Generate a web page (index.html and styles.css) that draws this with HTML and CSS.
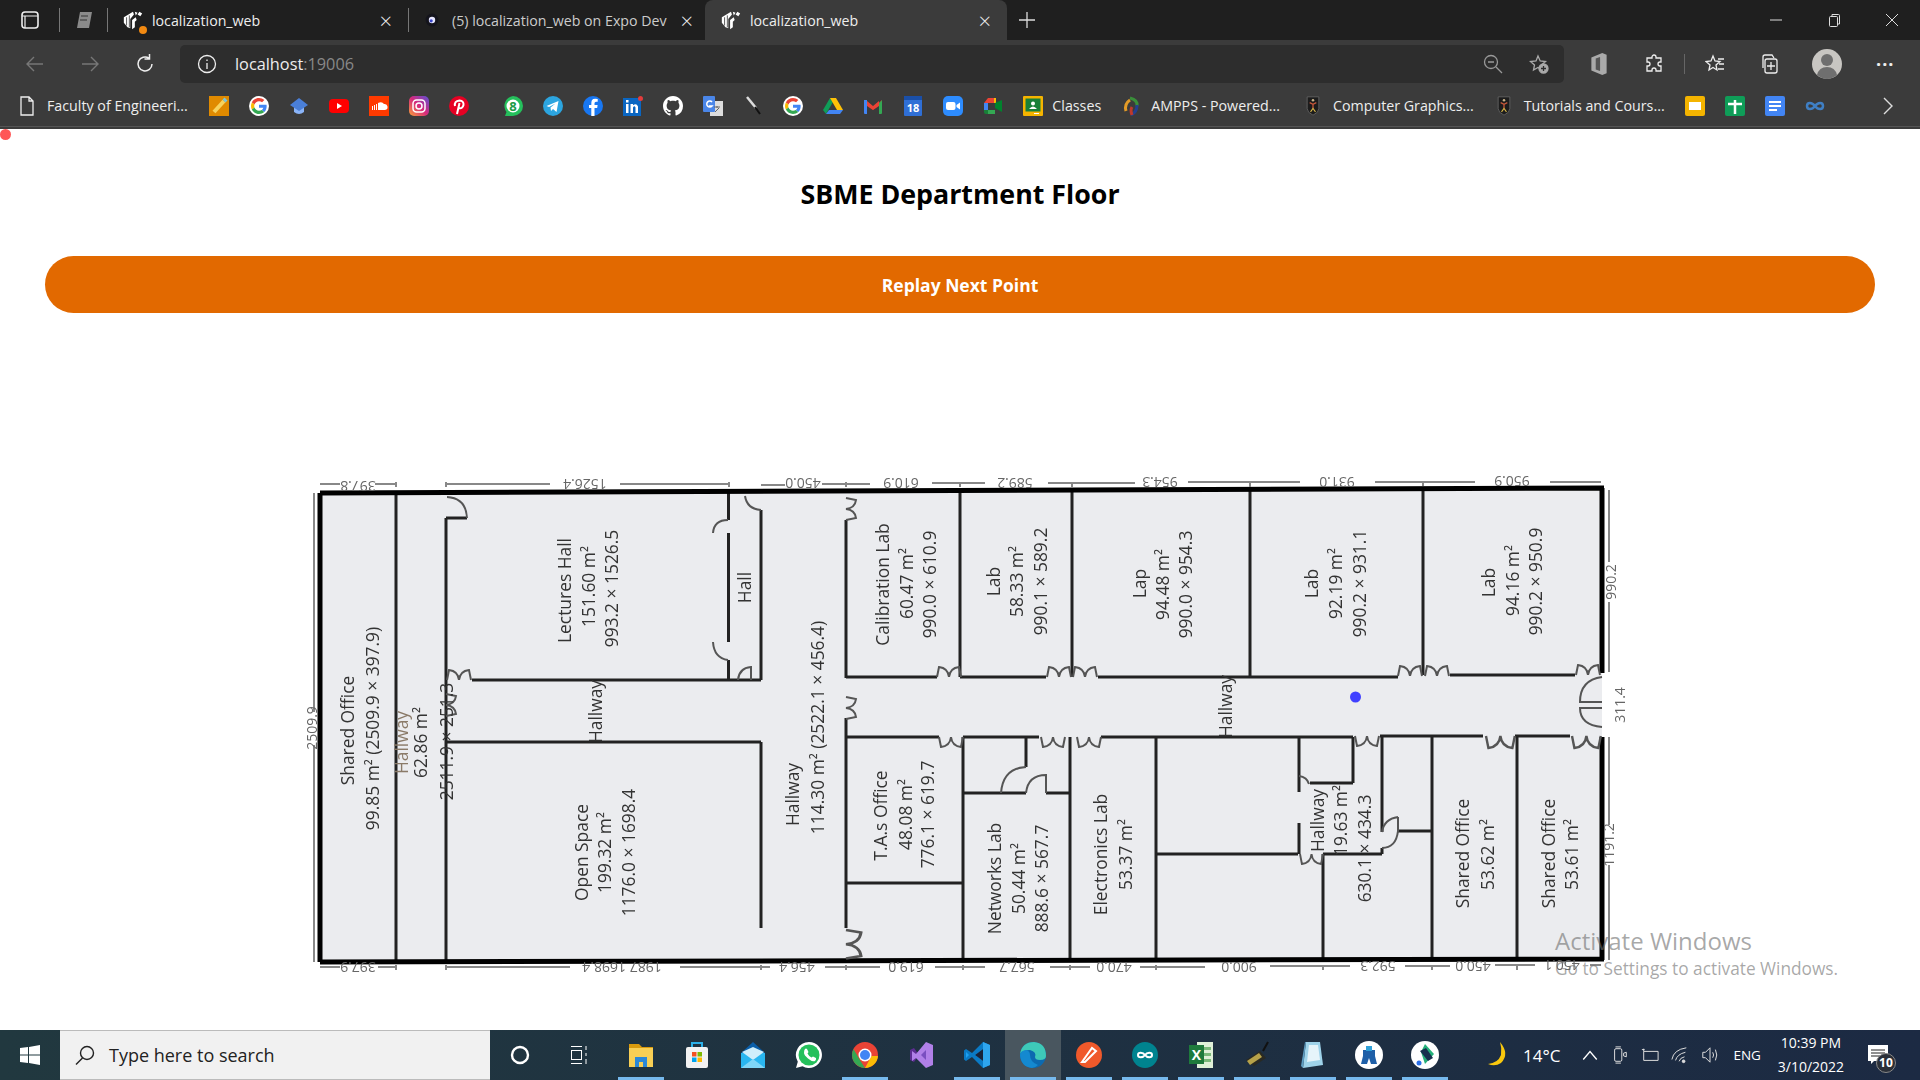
FILE: index.html
```html
<!DOCTYPE html>
<html lang="en">
<head>
	<meta charset="utf-8">
	<title>localization_web</title>
	<link rel="stylesheet" href="styles.css">
</head>
<body>
	<svg class="defs" width="0" height="0">
		<defs>
			<symbol id="expo" viewBox="0 0 24 24">
				<path fill="#fff" d="M2 9 12 3l1 3-4 5v10l-3-1-4-5zM14 3l3 1-2 3zM19 3l3 2-2 3-3-2zM11 12l4-3 1 3-2 2v6l-3 2z"/>
				<path stroke="#222" stroke-width=".8" d="M5 9v9M8 7v13"/>
			</symbol>
			<symbol id="google" viewBox="-6 -6 60 60">
				<circle cx="24" cy="24" r="30" fill="#fff"/>
				<path fill="#EA4335" d="M24 9.5c3.54 0 6.71 1.22 9.21 3.6l6.85-6.85C35.9 2.38 30.47 0 24 0 14.62 0 6.51 5.38 2.56 13.22l7.98 6.19C12.43 13.72 17.74 9.5 24 9.5z"/>
				<path fill="#4285F4" d="M46.98 24.55c0-1.57-.15-3.09-.38-4.55H24v9.02h12.94c-.58 2.96-2.26 5.48-4.78 7.18l7.73 6c4.51-4.18 7.09-10.36 7.09-17.65z"/>
				<path fill="#FBBC05" d="M10.53 28.59c-.48-1.45-.76-2.99-.76-4.59s.27-3.14.76-4.59l-7.98-6.19C.92 16.46 0 20.12 0 24c0 3.88.92 7.54 2.56 10.78l7.97-6.19z"/>
				<path fill="#34A853" d="M24 48c6.48 0 11.93-2.13 15.89-5.81l-7.73-6c-2.15 1.45-4.92 2.3-8.16 2.3-6.26 0-11.57-4.22-13.47-9.91l-7.98 6.19C6.51 42.62 14.62 48 24 48z"/>
			</symbol>
			<symbol id="shield" viewBox="0 0 20 24">
				<path fill="#1c1c1c" stroke="#666" d="M3 1h14v14q0 5-7 8-7-3-7-8z"/>
				<circle cx="10" cy="5" r="1.500" fill="#c9b48a"/>
				<path fill="none" stroke="#c9583a" stroke-width="1.500" d="M6 8l4 2 4-2M10 10v5"/>
				<path fill="none" stroke="#d9b84a" stroke-width="1.300" d="m7 19 3-4 3 4"/>
			</symbol>
			<path id="dd" fill="none" d="M0 0 2-10Q11-9 12 0 13-9 22-10L24 0"/>
			<path id="dv" fill="none" d="M0 0 10 2Q9 10 0 11 9 12 10 20L0 22"/>
		</defs>
	</svg>

	<header class="browser">
		<div class="tabstrip">
			<svg class="ico tab-ws" viewBox="0 0 20 20" fill="none" stroke="#eee" stroke-width="1.6"><rect x="2" y="2" width="16" height="16" rx="3"/><path d="M2 6h16M5 6v12" stroke-width="1.2"/></svg>
			<i class="sep sep-a"></i>
			<svg class="ico tab-md" viewBox="0 0 20 20"><path fill="#8a8a8a" d="M6 2h12l-3 16H3z"/><path stroke="#333" d="M7 6h7M6 10h7"/></svg>
			<i class="sep sep-b"></i>
			<div class="tab tab-one">
				<span class="fav-wrap"><svg class="fav"><use href="#expo"/></svg><b class="fav-dot"></b></span>
				<span class="tab-title">localization_web</span>
				<span class="tab-x">×</span>
			</div>
			<i class="sep"></i>
			<div class="tab tab-two">
				<svg class="fav fav-sm" viewBox="0 0 20 20"><circle cx="10" cy="10" r="8" fill="#14141c"/><circle cx="10" cy="10" r="4" fill="#e8e8ff"/><circle cx="9" cy="11" r="2" fill="#3946c9"/></svg>
				<span class="tab-title tab-clip">(5) localization_web on Expo Dev</span>
				<span class="tab-x">×</span>
			</div>
			<div class="tab tab-active">
				<svg class="fav"><use href="#expo"/></svg>
				<span class="tab-title">localization_web</span>
				<span class="tab-x">×</span>
			</div>
			<svg class="ico tab-plus" viewBox="0 0 20 20" stroke="#ddd" stroke-width="1.3"><path d="M10 2v16M2 10h16"/></svg>
			<div class="win-btns">
				<svg class="ico" viewBox="0 0 14 14" stroke="#ddd"><path d="M1 7h12"/></svg>
				<svg class="ico" viewBox="0 0 14 14" fill="none" stroke="#ddd"><rect x="2.5" y="3.5" width="8" height="10" rx="1"/><path d="M5 3V1.500h6.500a1 1 0 0 1 1 1V11H11"/></svg>
				<svg class="ico" viewBox="0 0 14 14" stroke="#ddd"><path d="m1 1 12 12M13 1 1 13"/></svg>
			</div>
		</div>

		<div class="toolbar">
			<svg class="ico nav" viewBox="0 0 20 20" fill="none" stroke="#777" stroke-width="1.4"><path d="M18 10H2M9 3l-7 7 7 7"/></svg>
			<svg class="ico nav" viewBox="0 0 20 20" fill="none" stroke="#777" stroke-width="1.4"><path d="M2 10h16M11 3l7 7-7 7"/></svg>
			<svg class="ico nav" viewBox="0 0 20 20" fill="none" stroke="#eee" stroke-width="1.5"><path d="M17 10a7 7 0 1 1-3-5.800M14.500 0v5h-5"/></svg>
			<div class="omnibox">
				<svg class="ico" viewBox="0 0 20 20" fill="none" stroke="#eee" stroke-width="1.3"><circle cx="10" cy="10" r="8.500"/><path d="M10 9v6M10 5.500v1.500"/></svg>
				<span class="url">localhost<span class="port">:19006</span></span>
				<svg class="ico omni-zoom" viewBox="0 0 20 20" fill="none" stroke="#999" stroke-width="1.300"><circle cx="8" cy="8" r="6.500"/><path d="M5 8h6M13 13l6 6"/></svg>
				<svg class="ico omni-star" viewBox="0 0 20 20" fill="none" stroke="#aaa" stroke-width="1.300"><path d="m9 2 2.200 5 5.300.5-4 3.500 1 5L9 13.500 4.500 16l1-5-4-3.500L7 7z"/><circle cx="14.500" cy="14.500" r="4.500" fill="#aaa"/><path stroke="#2d2d2d" d="M14.500 12v5M12 14.500h5"/></svg>
			</div>
			<svg class="ico tool tool-first" viewBox="0 0 16 22"><path fill="#aaa" d="M1 5 11 1l4 1.500v17L11 21 1 17z"/><path fill="#555" d="M5 6l4-1.500v13L5 16z"/></svg>
			<svg class="ico tool tool-ext" viewBox="0 0 20 20" fill="none" stroke="#eee" stroke-width="1.300"><path d="M8 3a2 2 0 0 1 4 0v1h5v4h-1a2 2 0 0 0 0 4h1v5h-5v-1a2 2 0 0 0-4 0v1H3v-5h1a2 2 0 0 0 0-4H3V4h5z"/></svg>
			<i class="tool-sep"></i>
			<svg class="ico tool tool-fav" viewBox="0 0 20 20" fill="none" stroke="#eee" stroke-width="1.300"><path d="m8 2 2 5 5 .5-4 3.500 1 5-4-2.500L4 16l1-5-4-3.500L6 7zM13 5h6M14 10h5M13 15h6"/></svg>
			<svg class="ico tool" viewBox="0 0 20 20" fill="none" stroke="#eee" stroke-width="1.300"><path d="M4 14V3a2 2 0 0 1 2-2h7l2 3"/><rect x="6" y="5" width="12" height="14" rx="2"/><path d="M12 8v8M8 12h8"/></svg>
			<svg class="avatar" viewBox="0 0 30 30"><circle cx="15" cy="15" r="15" fill="#c8c6c2"/><circle cx="15" cy="11" r="6" fill="#6f6f6f"/><path fill="#6f6f6f" d="M5 26q2-8 10-8t10 8q-10 8-20 0z"/></svg>
			<span class="dots">···</span>
		</div>

		<nav class="bookmarks">
			<div class="bm bm-first">
				<svg class="bm-ico" viewBox="0 0 20 20" fill="none" stroke="#eee" stroke-width="1.300"><path d="M4 1h8l4 4v14H4zM12 1v4h4"/></svg>
				<span class="bm-text">Faculty of Engineeri...</span>
			</div>
			<svg class="bm-ico" viewBox="0 0 20 20"><rect width="20" height="20" fill="#e08a00"/><path stroke="#f7d25c" stroke-width="4" d="M5 16 15 5"/><path stroke="#7ec7d8" stroke-width="4" d="m15 5 2-2"/></svg>
			<svg class="bm-ico"><use href="#google"/></svg>
			<svg class="bm-ico" viewBox="0 0 20 20"><path fill="#8ab4f8" d="M5 10h10v6q-5 4-10 0z"/><path fill="#4a7fd8" d="M10 2l9 7-9 6-9-6z"/></svg>
			<svg class="bm-ico" viewBox="0 0 20 20"><rect y="3" width="20" height="14" rx="4" fill="#f00"/><path fill="#fff" d="m8 7 5 3-5 3z"/></svg>
			<svg class="bm-ico" viewBox="0 0 20 20"><rect width="20" height="20" fill="#ff3a00"/><path fill="#fff" d="M15 8a3 3 0 0 1 1 6H9V7q4-2 6 1zM8 8v6H7V8zM6 9v5H5V9zM4 10v4H3v-4z"/></svg>
			<svg class="bm-ico" viewBox="0 0 20 20"><defs><linearGradient id="ig" x1="0" y1="1" x2="1" y2="0"><stop offset="0" stop-color="#f9a13a"/><stop offset=".5" stop-color="#d6297b"/><stop offset="1" stop-color="#5b51d8"/></linearGradient></defs><rect width="20" height="20" rx="5" fill="url(#ig)"/><rect x="4" y="4" width="12" height="12" rx="3.500" fill="none" stroke="#fff" stroke-width="1.500"/><circle cx="10" cy="10" r="3" fill="none" stroke="#fff" stroke-width="1.500"/></svg>
			<svg class="bm-ico" viewBox="0 0 20 20"><circle cx="10" cy="10" r="10" fill="#e60023"/><path fill="none" stroke="#fff" stroke-width="2" d="M8 18l2.500-11M6 10Q5 5 10.500 4.500 15 5 14.500 9 13.500 13 10 12"/></svg>
			<svg class="bm-ico bm-gap" viewBox="0 0 20 20"><path fill="#25c05c" d="M10 0a10 10 0 0 1 0 20H2l1.500-4A10 10 0 0 1 10 0z"/><circle cx="10" cy="10" r="6.500" fill="#fff"/><text class="ico-num ico-num-green" x="10" y="14.500">8</text></svg>
			<svg class="bm-ico" viewBox="0 0 20 20"><circle cx="10" cy="10" r="10" fill="#2ca5e0"/><path fill="#fff" d="m3.500 10 12-5-2 11-3.500-3-2 2-.5-3.500 5-4-6.500 3.500z"/></svg>
			<svg class="bm-ico" viewBox="0 0 20 20"><circle cx="10" cy="10" r="10" fill="#1877f2"/><path fill="#fff" d="M11.500 20v-8h2.700l.4-3h-3.100V7.200q0-1.500 1.500-1.500h1.700V3q-4.600-.9-5.800 1.200-.7 1.100-.6 4.800H6v3h2.300v8z"/></svg>
			<svg class="bm-ico" viewBox="0 0 20 20"><rect y="2" width="18" height="18" fill="#0a66c2"/><path fill="#fff" d="M3 8h2.500v9H3zM3 4h2.500v2.500H3zM7.500 8H10v1.200Q13.500 6.800 15 10.500V17h-2.500v-5.500q-1-2.500-2.500 0V17H7.500z"/><circle cx="17.500" cy="2.500" r="2.500" fill="#e23c3c"/></svg>
			<svg class="bm-ico" viewBox="0 0 16 16"><path fill="#fff" d="M8 0C3.580 0 0 3.580 0 8c0 3.540 2.290 6.530 5.470 7.590.4.070.55-.17.55-.38 0-.19-.01-.82-.01-1.490-2.010.37-2.530-.49-2.690-.94-.09-.23-.48-.94-.82-1.130-.28-.15-.68-.52-.01-.53.63-.01 1.080.58 1.230.82.720 1.210 1.870.87 2.330.66.070-.52.28-.87.51-1.070-1.780-.2-3.640-.89-3.640-3.950 0-.87.31-1.590.82-2.150-.08-.2-.36-1.020.08-2.120 0 0 .67-.21 2.200.82.64-.18 1.320-.27 2-.27.68 0 1.360.09 2 .27 1.530-1.040 2.200-.82 2.200-.82.44 1.100.16 1.920.08 2.120.51.56.82 1.270.82 2.150 0 3.070-1.870 3.750-3.650 3.950.29.25.54.73.54 1.480 0 1.070-.01 1.930-.01 2.200 0 .21.15.46.55.38A8.013 8.013 0 0 0 16 8c0-4.420-3.580-8-8-8z"/></svg>
			<svg class="bm-ico" viewBox="0 0 20 20"><rect x="7" y="5" width="13" height="15" fill="#ddd"/><rect width="12" height="16" rx="1" fill="#4a86e8"/><path stroke="#fff" stroke-width="1.500" fill="none" d="M9 6a3 3 0 1 0 0 4H6"/><path stroke="#666" d="M11 11h6M14 10v2M12 16l4-4"/></svg>
			<svg class="bm-ico" viewBox="0 0 20 20" fill="none"><path stroke="#ddd" stroke-width="2.500" d="m4 1 9 11"/><path stroke="#111" stroke-width="2" d="m12 11 5 7"/></svg>
			<svg class="bm-ico"><use href="#google"/></svg>
			<svg class="bm-ico" viewBox="0 0 20 20"><path fill="#0f9d58" d="M7 2 0 14l3 4 7-12z"/><path fill="#ffc107" d="M7 2h6l7 12h-6z"/><path fill="#4285f4" d="M3 18h14l3-4H6z"/></svg>
			<svg class="bm-ico" viewBox="0 0 20 20"><path fill="#c5221f" d="M1 4l9 7 9-7v3l-9 7-9-7z"/><path fill="#4285f4" d="M1 4h3v14H2a1 1 0 0 1-1-1z"/><path fill="#34a853" d="M16 7l3-3v13a1 1 0 0 1-1 1h-2z"/><path fill="#ea4335" d="M4 5l6 5 6-5v5l-6 4-6-4z"/></svg>
			<svg class="bm-ico" viewBox="0 0 20 20"><rect x="1" width="18" height="20" rx="1" fill="#2f6fd6"/><rect x="1" width="18" height="4" fill="#1a4fa8"/><text class="ico-num ico-num-white" x="10" y="16">18</text></svg>
			<svg class="bm-ico" viewBox="0 0 20 20"><rect width="20" height="20" rx="5" fill="#2d8cff"/><rect x="3" y="6" width="9.500" height="8" rx="2" fill="#fff"/><path fill="#fff" d="m13.500 9 3.500-2.500v7L13.500 11z"/></svg>
			<svg class="bm-ico" viewBox="0 0 20 20"><path fill="#ea4335" d="M5 2h6v5H1z"/><path fill="#4285f4" d="M1 7h4v7H1z"/><path fill="#188038" d="M1 14h4v4H3a2 2 0 0 1-2-2z"/><path fill="#34a853" d="M5 14h7v4H5z"/><path fill="#fbbc04" d="M11 2h2v5H11z"/><path fill="#00832d" d="M12 7l7-3v12l-7-4z"/><rect x="5" y="7" width="7" height="7" fill="#3b3b3b"/></svg>
			<div class="bm bm-tight">
				<svg class="bm-ico" viewBox="0 0 20 20"><rect width="20" height="20" rx="1" fill="#f5b400"/><rect x="2.500" y="2.500" width="15" height="13" fill="#188038"/><circle cx="10" cy="7.500" r="2" fill="#fff"/><path fill="#fff" d="M6 13q4-5 8 0zM11 17h5v1h-5z"/></svg>
				<span class="bm-text">Classes</span>
			</div>
			<div class="bm bm-wide">
				<svg class="bm-ico" viewBox="0 0 20 20" fill="none" stroke-width="3"><path stroke="#3a8f3a" d="M9 2q8 2 7 8"/><path stroke="#24408f" d="M16 9q0 7-6 10"/><path stroke="#c0392b" d="M11 19q-2-5 0-8"/><path stroke="#e39b27" d="M9 4Q3 8 5 15"/></svg>
				<span class="bm-text">AMPPS - Powered...</span>
			</div>
			<div class="bm">
				<svg class="bm-ico"><use href="#shield"/></svg>
				<span class="bm-text">Computer Graphics...</span>
			</div>
			<div class="bm">
				<svg class="bm-ico"><use href="#shield"/></svg>
				<span class="bm-text">Tutorials and Cours...</span>
			</div>
			<svg class="bm-ico" viewBox="0 0 20 20"><rect width="20" height="20" rx="2" fill="#f4b400"/><rect x="4" y="6" width="12" height="8" fill="#fff"/></svg>
			<svg class="bm-ico" viewBox="0 0 20 20"><rect width="20" height="20" rx="2" fill="#0f9d58"/><path stroke="#fff" stroke-width="2.500" d="M3 8h14M10 4v14"/></svg>
			<svg class="bm-ico" viewBox="0 0 20 20"><rect width="20" height="20" rx="2" fill="#4285f4"/><path stroke="#fff" stroke-width="2" d="M4 6h12M4 10h12M4 14h8"/></svg>
			<svg class="bm-ico" viewBox="0 0 20 20" fill="none" stroke="#3f7fc4" stroke-width="2.500"><path d="M10 10C7 6 2 6 2 10s5 4 8 0 8-4 8 0-5 4-8 0z"/></svg>
			<svg class="ico bm-more" viewBox="0 0 20 20" fill="none" stroke="#ddd" stroke-width="1.400"><path d="m6 2 8 8-8 8"/></svg>
		</nav>
	</header>

	<main class="page">
		<b class="rec-dot"></b>
		<h1 class="title">SBME Department Floor</h1>
		<button class="replay">Replay Next Point</button>

		<svg class="plan" viewBox="290 460 1370 530" width="1370" height="530">
			<polygon class="floor" points="320,493 1602,488 1602,959 320,962"/>

			<!-- inner walls -->
			<path class="wall" d="M396 493V962M446 518V962M446 518H467M728.500 493V520M728.500 533V642M728.500 660V680M761 510V680M472 680H761M446 742H761M761 742V928
				M846 520V678M846 718V928M960 490V677M1072 490V677M1250 489V676M1423 488V675
				M846 677H937M960 677H1046M1098 677H1398M1450 675H1575
				M847 737H939M963 737H1039M1101 737H1353M1380 736H1483M1515 736H1570
				M963 737V961M1026 737V767M963 793H1026M1046 793H1069M1070 737V961M1156 737V961
				M1156 854H1298M847 883H963M1299 737V792M1299 823V854M1310 783H1353M1353 737V783
				M1382 736V832M1382 848V854M1398 831H1431M1432 736V960M1517 736V960M1323 854H1382M1323 854V960"/>

			<!-- outer walls -->
			<path class="outer" d="M320 493V962M320 493 1604 488M320 962 1604 959M1602 488V673M1602 737V960"/>

			<!-- doors -->
			<g class="door">
				<use href="#dd" transform="translate(937 677)"/>
				<use href="#dd" transform="translate(1047 677)"/>
				<use href="#dd" transform="translate(1073 677)"/>
				<use href="#dd" transform="translate(1398 676)"/>
				<use href="#dd" transform="translate(1425 676)"/>
				<use href="#dd" transform="translate(1576 675)"/>
				<use href="#dd" transform="translate(939 737) scale(1 -1)"/>
				<use href="#dd" transform="translate(1041 737) scale(1 -1)"/>
				<use href="#dd" transform="translate(1077 737) scale(1 -1)"/>
				<use href="#dd" transform="translate(1355 736) scale(1 -1)"/>
				<use href="#dd" transform="translate(1486 736) scale(1.200 -1.200)"/>
				<use href="#dd" transform="translate(1572 736) scale(1.200 -1.200)"/>
				<use href="#dd" transform="translate(1300 854) scale(.96 -1)"/>
				<use href="#dd" transform="translate(447 680)"/>
				<use href="#dv" transform="translate(846 498)"/>
				<use href="#dv" transform="translate(846 697)"/>
				<use href="#dv" transform="translate(846 930) scale(1.500 1.300)"/>
				<use href="#dv" transform="translate(446 694)"/>
				<path d="M447 497Q466 498 467 518M713 533Q714 520 728 520M713 642Q714 658 728 660M738 680Q739 668 751 667V680M745 496Q747 509 761 510
					M1001 793Q1003 768 1026 767M1026 793Q1028 775 1046 775V793M1299 776Q1307 777 1309 784
					M1398 817V831Q1396 848 1382 848M1382 832Q1384 819 1398 817
					M1602 677Q1580 680 1580 702H1602M1602 727Q1580 725 1580 708H1602"/>
			</g>

			<!-- dimension lines, the drawing's own labels run upside down -->
			<path class="dim" d="M314 493V712M314 745V962M320 484H340M375 484H396M446 484H550M620 484H729M761 485H785M822 484H870M932 483H985M1048 483H1135M1188 482H1300M1375 482H1475M1550 482H1601M1609 490V562M1609 602V672M1609 737V825M1609 865V960
				M320 967H340M378 967H396M446 967H570M680 967H770M825 967H880M935 967H985M1050 967H1090M1140 967H1205M1270 966H1350M1405 966H1450M1495 965H1535M1590 965H1601
				M396 482V487M446 482V487M729 482V487M846 482V487M960 482V487M1072 482V487M1250 482V487M1423 481V486M396 965V970M446 965V970M761 965V970M846 965V970M963 965V970M1070 965V970M1156 965V970M1323 965V970M1432 965V970M1517 965V970"/>
			<g class="dim-text">
				<text transform="rotate(180 358 486)" x="358" y="486">397.8</text>
				<text transform="rotate(180 585 484)" x="585" y="484">1526.4</text>
				<text transform="rotate(180 803 483)" x="803" y="483">450.0</text>
				<text transform="rotate(180 901 483)" x="901" y="483">610.9</text>
				<text transform="rotate(180 1015 483)" x="1015" y="483">589.2</text>
				<text transform="rotate(180 1160 482)" x="1160" y="482">954.3</text>
				<text transform="rotate(180 1337 482)" x="1337" y="482">931.0</text>
				<text transform="rotate(180 1512 481)" x="1512" y="481">950.9</text>
				<text transform="rotate(180 358 967)" x="358" y="967">397.9</text>
				<text transform="rotate(180 622 967)" x="622" y="967">1987 1698.4</text>
				<text transform="rotate(180 797 967)" x="797" y="967">456.4</text>
				<text transform="rotate(180 906 967)" x="906" y="967">619.0</text>
				<text transform="rotate(180 1017 967)" x="1017" y="967">567.7</text>
				<text transform="rotate(180 1114 967)" x="1114" y="967">470.0</text>
				<text transform="rotate(180 1239 967)" x="1239" y="967">900.0</text>
				<text transform="rotate(180 1378 966)" x="1378" y="966">592.3</text>
				<text transform="rotate(180 1473 966)" x="1473" y="966">450.0</text>
				<text transform="rotate(180 1562 965)" x="1562" y="965">450.1</text>
				<text transform="rotate(-90 311 728)" x="311" y="728">2509.9</text>
				<text transform="rotate(-90 1610 582)" x="1610" y="582">990.2</text>
				<text transform="rotate(-90 1608 845)" x="1608" y="845">1191.2</text>
				<text transform="rotate(-90 1619 705)" x="1619" y="705">311.4</text>
			</g>

			<!-- room labels -->
			<g class="room" transform="translate(0 1.500)">
				<text transform="rotate(-90 347 729)" x="347" y="729">Shared Office</text>
				<text transform="rotate(-90 372 727)" x="372" y="727">99.85 m² (2509.9 × 397.9)</text>
				<text transform="rotate(-90 401 741)" x="401" y="741" class="room-faint">Hallway</text>
				<text transform="rotate(-90 420 741)" x="420" y="741">62.86 m²</text>
				<text transform="rotate(-90 446 740)" x="446" y="740">2511.9 × 251.3</text>
				<text transform="rotate(-90 564 589)" x="564" y="589">Lectures Hall</text>
				<text transform="rotate(-90 587.500 585)" x="587.500" y="585">151.60 m²</text>
				<text transform="rotate(-90 611 587)" x="611" y="587">993.2 × 1526.5</text>
				<text transform="rotate(-90 744 586)" x="744" y="586">Hall</text>
				<text transform="rotate(-90 595 710)" x="595" y="710">Hallway</text>
				<text transform="rotate(-90 792 793)" x="792" y="793">Hallway</text>
				<text transform="rotate(-90 817 726)" x="817" y="726">114.30 m² (2522.1 × 456.4)</text>
				<text transform="rotate(-90 581 851)" x="581" y="851">Open Space</text>
				<text transform="rotate(-90 604 851)" x="604" y="851">199.32 m²</text>
				<text transform="rotate(-90 627.500 851)" x="627.500" y="851">1176.0 × 1698.4</text>
				<text transform="rotate(-90 882 583)" x="882" y="583">Calibration Lab</text>
				<text transform="rotate(-90 906 582)" x="906" y="582">60.47 m²</text>
				<text transform="rotate(-90 929 583)" x="929" y="583">990.0 × 610.9</text>
				<text transform="rotate(-90 992.500 580)" x="992.500" y="580">Lab</text>
				<text transform="rotate(-90 1016 580)" x="1016" y="580">58.33 m²</text>
				<text transform="rotate(-90 1040 580)" x="1040" y="580">990.1 × 589.2</text>
				<text transform="rotate(-90 1139 582)" x="1139" y="582">Lap</text>
				<text transform="rotate(-90 1162 583)" x="1162" y="583">94.48 m²</text>
				<text transform="rotate(-90 1185 583)" x="1185" y="583">990.0 × 954.3</text>
				<text transform="rotate(-90 1311 582)" x="1311" y="582">Lab</text>
				<text transform="rotate(-90 1335 582)" x="1335" y="582">92.19 m²</text>
				<text transform="rotate(-90 1358.500 582)" x="1358.500" y="582">990.2 × 931.1</text>
				<text transform="rotate(-90 1488 581)" x="1488" y="581">Lab</text>
				<text transform="rotate(-90 1512 579)" x="1512" y="579">94.16 m²</text>
				<text transform="rotate(-90 1535 580)" x="1535" y="580">990.2 × 950.9</text>
				<text transform="rotate(-90 1225 705)" x="1225" y="705">Hallway</text>
				<text transform="rotate(-90 880 814)" x="880" y="814">T.A.s Office</text>
				<text transform="rotate(-90 905 813)" x="905" y="813">48.08 m²</text>
				<text transform="rotate(-90 927 813)" x="927" y="813">776.1 × 619.7</text>
				<text transform="rotate(-90 993.500 877)" x="993.500" y="877">Networks Lab</text>
				<text transform="rotate(-90 1017.500 877)" x="1017.500" y="877">50.44 m²</text>
				<text transform="rotate(-90 1041 877)" x="1041" y="877">888.6 × 567.7</text>
				<text transform="rotate(-90 1100 853)" x="1100" y="853">Electronics Lab</text>
				<text transform="rotate(-90 1125 853)" x="1125" y="853">53.37 m²</text>
				<text transform="rotate(-90 1317 819)" x="1317" y="819">Hallway</text>
				<text transform="rotate(-90 1340 819)" x="1340" y="819">19.63 m²</text>
				<text transform="rotate(-90 1364 847)" x="1364" y="847">630.1 × 434.3</text>
				<text transform="rotate(-90 1462 852)" x="1462" y="852">Shared Office</text>
				<text transform="rotate(-90 1487 853)" x="1487" y="853">53.62 m²</text>
				<text transform="rotate(-90 1548 852)" x="1548" y="852">Shared Office</text>
				<text transform="rotate(-90 1571 853)" x="1571" y="853">53.61 m²</text>
			</g>

			<circle class="pos" cx="1355.500" cy="697" r="5.500"/>
		</svg>

		<div class="activate">
			<div class="activate-big">Activate Windows</div>
			<div class="activate-small">Go to Settings to activate Windows.</div>
		</div>
	</main>

	<footer class="taskbar">
		<svg class="ico start" viewBox="0 0 20 20" fill="#fff"><path d="M0 3l8-1v7.500H0zM9 2l11-2v9.500H9zM0 10.500h8V18l-8-1zM9 10.500h11V20L9 18z"/></svg>
		<div class="search">
			<svg class="ico" viewBox="0 0 20 20" fill="none" stroke="#222" stroke-width="1.400"><circle cx="12" cy="8" r="6.500"/><path d="M7.500 13 1 19.500"/></svg>
			<span>Type here to search</span>
		</div>
		<div class="cell"><svg class="ico" viewBox="0 0 20 20" fill="none" stroke="#fff" stroke-width="2.400"><circle cx="10" cy="10" r="8"/></svg></div>
		<div class="cell cell-task"><svg class="ico" viewBox="0 0 20 20" fill="none" stroke="#fff"><path d="M1 1.500h11M1 18.500h11"/><rect x="1.500" y="5.500" width="10" height="9"/><path d="M16 1v4M16 8v3M16 14v5"/></svg></div>
		<div class="cell on"><svg class="tb-ico" viewBox="0 0 28 28"><path fill="#d99a0d" d="M2 3h10l3 3h11v4H2z"/><path fill="#f8cf55" d="M2 7h24v19H2z"/><path fill="#2b88d8" d="M8 16h12v10h-4v-5h-4v5H8z"/></svg></div>
		<div class="cell"><svg class="tb-ico" viewBox="0 0 28 28"><path fill="none" stroke="#2cb0e8" stroke-width="2" d="M9 8V2h10v6"/><rect x="3" y="6" width="22" height="21" rx="2" fill="#f2f2f2"/><path fill="#f25022" d="M9 11h4.500v4.500H9z"/><path fill="#7fba00" d="M14.500 11H19v4.500h-4.500z"/><path fill="#00a4ef" d="M9 16.500h4.500V21H9z"/><path fill="#ffb900" d="M14.500 16.500H19V21h-4.500z"/></svg></div>
		<div class="cell"><svg class="tb-ico" viewBox="0 0 28 28"><path fill="#0b5ea8" d="M14 1 26 12H2z"/><path fill="#29b6f0" d="M2 12h24v15H2z"/><path fill="#cfeefb" d="m3 11 11 8 11-8-11-5z"/><path fill="#7fd6f7" d="m2 27 12-9 12 9z"/></svg></div>
		<div class="cell"><svg class="tb-ico" viewBox="0 0 28 28"><path fill="#fff" d="M14 1a13 13 0 1 1-6.500 24.300L1 27l1.800-6.300A13 13 0 0 1 14 1z"/><circle cx="14" cy="14" r="10.500" fill="#25c05c"/><path fill="#fff" d="M10 8q1-1 2 0l1.500 3-1 1.500q1.500 3 4 4l1.500-1 3 1.500q.5 1.500-1 3-3 1-7-2.500T9 12q0-3 1-4z"/></svg></div>
		<div class="cell on"><svg class="tb-ico" viewBox="0 0 28 28"><circle cx="14" cy="14" r="13" fill="#ea4335"/><path fill="#34a853" d="M14 27A13 13 0 0 1 2.500 8l7 12z"/><path fill="#fbbc05" d="M14 27l6.500-12H14h13a13 13 0 0 1-13 12z"/><circle cx="14" cy="14" r="6.500" fill="#fff"/><circle cx="14" cy="14" r="5" fill="#4285f4"/></svg></div>
		<div class="cell"><svg class="tb-ico" viewBox="0 0 28 28"><path fill="#5c2d91" d="M3 9l4-2 5 7-5 7-4-2z"/><path fill="#b180e8" d="m19 1 7 3v20l-7 3-10-10-4 3V10l4 3z"/><path fill="#7a4fc0" d="M19 9v10l-5-5z"/></svg></div>
		<div class="cell on"><svg class="tb-ico" viewBox="0 0 28 28"><path fill="#0a7ac5" d="M20 1 9 12 3 8 1 9.500v9L3 20l6-4 11 11 7-3V4z"/><path fill="#2ea5ee" d="M20 1 27 4v20l-7 3zM20 8l-8 6 8 6z"/><path fill="#17223a" d="M20 8v12l-8-6z"/><path fill="#1da1f2" d="M3 11l3 3-3 3z"/></svg></div>
		<div class="cell on cell-active"><svg class="tb-ico" viewBox="0 0 28 28"><circle cx="14" cy="14" r="13" fill="#0c6ab0"/><path fill="#3ec9b8" d="M1 13Q3 1 15 1q12 1 12 14 0 4-6 4-5 0-5-3 2-5-5-7-8 0-10 4z"/><path fill="#1489d0" d="M1 14q0-4 6-5 4 1 4 5 0 7 8 10-3 3-6 3Q2 26 1 14z"/></svg></div>
		<div class="cell on"><svg class="tb-ico" viewBox="0 0 28 28"><circle cx="14" cy="14" r="13" fill="#f0592b"/><path fill="none" stroke="#fff" stroke-width="2" d="m7 21 10-14 4 3-11 11z"/></svg></div>
		<div class="cell on"><svg class="tb-ico" viewBox="0 0 28 28"><circle cx="14" cy="14" r="13" fill="#00838f"/><path fill="none" stroke="#fff" stroke-width="2" d="M14 14c-2-3-7-3-7 0s5 3 7 0 7-3 7 0-5 3-7 0z"/></svg></div>
		<div class="cell on"><svg class="tb-ico" viewBox="0 0 28 28"><path fill="#dff0d8" d="M10 1h16v26H10z"/><path fill="#7ab97a" d="M15 6h9v3h-9zM15 12h9v3h-9zM15 18h9v3h-9z"/><path fill="#1e7a3c" d="M2 4h15v19H2z"/><text class="ico-x" x="9.500" y="19">X</text></svg></div>
		<div class="cell on"><svg class="tb-ico" viewBox="0 0 28 28"><path fill="#2a2a22" d="m3 19 14-9 6 7-12 8z"/><path fill="#b6a24a" d="m4 20 12-8 3 4-12 8z"/><path stroke="#111" stroke-width="2" d="M20 10l5-9"/></svg></div>
		<div class="cell on"><svg class="tb-ico" viewBox="0 0 28 28"><path fill="#9fd3ea" d="M7 1h14l3 23-20 3z"/><path fill="#5f9ec3" d="M4 27l3-26-1 0-4 24z"/><path fill="#e6f4fa" d="M10 4h9l2 15-13 2z"/></svg></div>
		<div class="cell on"><svg class="tb-ico" viewBox="0 0 28 28"><circle cx="14" cy="14" r="14" fill="#fff"/><path fill="#1e5fa8" d="M8 9h12v6l2 8h-6l-2-6-2 6H6l2-8z"/><path fill="#2fa0d8" d="M11 5h6v5h-6z"/></svg></div>
		<div class="cell on"><svg class="tb-ico" viewBox="0 0 28 28"><circle cx="14" cy="14" r="14" fill="#fff"/><path fill="#25b07a" d="m14 3 9 10-9 10-4-12z"/><path fill="#17304d" d="m9 10 6-3 7 10-5 3z"/><circle cx="8" cy="22" r="2.500" fill="#2a6fe8"/></svg></div>
		<div class="tray">
			<svg class="tb-ico tray-moon" viewBox="0 0 24 28"><path fill="#f9c80e" d="M14 1q10 12 1 21-6 4-13 1 10-1 13-9 1-7-1-13z"/></svg>
			<span class="tray-temp">14°C</span>
			<svg class="ico tray-ico" viewBox="0 0 16 16" fill="none" stroke="#fff" stroke-width="1.200"><path d="m2 12 6-7 6 7"/></svg>
			<svg class="ico tray-ico" viewBox="0 0 16 20" fill="none" stroke="#ddd" stroke-width="1.100"><rect x="2" y="3" width="8" height="14" rx="1.500"/><path d="m12 8 3-1v5l-3-1zM3 1h6M3 19h6"/></svg>
			<svg class="ico tray-ico" viewBox="0 0 20 16" fill="none" stroke="#ddd" stroke-width="1.100"><path d="M3 4h16v10H3zM1 2h3M3 1v3"/></svg>
			<svg class="ico tray-ico" viewBox="0 0 20 20" fill="none" stroke="#ddd" stroke-width="1.100"><path d="M1 15Q3 4 17 2M5 16Q7 9 16 7M9 17q1-4 6-5"/><circle cx="14" cy="17" r="1.500" fill="#ddd"/></svg>
			<svg class="ico tray-ico" viewBox="0 0 20 20" fill="none" stroke="#ddd" stroke-width="1.100"><path d="M2 7h3l5-5v16l-5-5H2zM13 7q2 3 0 6M16 4q3 6 0 12"/></svg>
			<span class="tray-lang">ENG</span>
			<div class="clock"><span>10:39 PM</span><span>3/10/2022</span></div>
			<div class="notif">
				<svg class="ico" viewBox="0 0 20 20"><path fill="#fff" d="M0 0h20v16H6l-3 3v-3H0z"/><path stroke="#222" d="M3 5h14M3 8h14M3 11h14"/></svg>
				<span class="notif-badge">10</span>
			</div>
		</div>
	</footer>
</body>
</html>
```

FILE: styles.css
```css
* {
	box-sizing: border-box;
}

html, body {
	height: 100%;
}

body {
	margin: 0;
	display: flex;
	flex-direction: column;
	height: 1080px;
	overflow: hidden;
	background: #fff;
	font-family: "Open Sans", "Noto Sans", sans-serif;
}

.defs {
	position: absolute;
}

.ico {
	display: block;
	flex: none;
	width: 20px;
	height: 20px;
}

/* browser chrome */
.browser {
	flex: none;
	height: 129px;
	background: #3b3b3b;
	color: #eee;
	font-size: 14.2px;
}

.tabstrip {
	display: flex;
	align-items: center;
	height: 40px;
	padding-left: 20px;
	background: #1f1f1f;
}

.sep {
	flex: none;
	width: 1px;
	height: 24px;
	background: #777;
}

.sep-a {
	margin: 0 14px 0 19px;
}

.sep-b {
	margin: 0 14px 0 13px;
}

.tab-md {
	width: 20px;
}

.tab {
	display: flex;
	align-items: center;
	height: 40px;
	padding-left: 0;
}

.tab-one {
	width: 286px;
}

.tab-two {
	width: 296px;
	padding-left: 15px;
}

.tab-active {
	width: 302px;
	padding-left: 15px;
	background: #3b3b3b;
	border-radius: 8px 8px 0 0;
}

.fav-wrap {
	position: relative;
	flex: none;
}

.fav {
	display: block;
	flex: none;
	width: 22px;
	height: 22px;
}

.fav-sm {
	width: 16px;
	height: 16px;
	margin-right: 6px;
}

.fav-dot {
	position: absolute;
	right: -3px;
	bottom: -3px;
	width: 8px;
	height: 8px;
	border-radius: 50%;
	background: #f28a12;
}

.tab-title {
	margin-left: 8px;
	white-space: nowrap;
	color: #eee;
}

.tab-clip {
	width: 218px;
	margin-left: 6px;
	overflow: hidden;
	color: #ccc;
}

.tab-x {
	margin-left: auto;
	margin-right: 16px;
	font-size: 22px;
	font-weight: 300;
	line-height: 1;
}

.tab-two .tab-x {
	margin-right: 12px;
}

.tab-plus {
	margin-left: 10px;
}

.win-btns {
	display: flex;
	gap: 44px;
	margin-left: auto;
	padding-right: 21px;
}

.win-btns .ico {
	width: 14px;
	height: 14px;
}

.toolbar {
	display: flex;
	align-items: center;
	height: 45px;
	padding: 2px 0 0 25px;
}

.nav {
	margin-right: 35px;
}

.nav:nth-child(3) {
	margin-right: 25px;
}

.omnibox {
	display: flex;
	align-items: center;
	width: 1384px;
	height: 38px;
	padding: 0 15px 0 17px;
	background: #2d2d2d;
	border-radius: 5px;
}

.url {
	margin-left: 18px;
	font-size: 16.3px;
	color: #eee;
}

.port {
	color: #888;
}

.omni-zoom {
	margin-left: auto;
}

.omni-star {
	margin-left: 26px;
}

.tool {
	margin-left: 34px;
}

.tool-first {
	width: 18px;
	height: 24px;
	margin-left: 26px;
}

.tool-ext {
	margin-left: 36px;
}

.tool-sep {
	flex: none;
	width: 1px;
	height: 20px;
	margin-left: 20px;
	background: #666;
}

.tool-fav {
	margin-left: 20px;
}

.avatar {
	flex: none;
	width: 30px;
	height: 30px;
	margin-left: 33px;
}

.dots {
	margin-left: 34px;
	font-size: 18px;
	font-weight: 700;
	letter-spacing: 1px;
}

.bookmarks {
	display: flex;
	align-items: center;
	gap: 20px;
	height: 42px;
	padding-left: 17px;
	border-bottom: 1px solid #555;
}

.bm {
	display: flex;
	align-items: center;
	gap: 10px;
}

.bm-first {
	margin-right: 1.500px;
}

.bm-wide {
	margin-right: 3px;
}

.bm-ico {
	display: block;
	flex: none;
	width: 20px;
	height: 20px;
}

.bm-gap {
	margin-left: 14px;
}

.bm-tight {
	gap: 9px;
}

.bm-text {
	white-space: nowrap;
	font-size: 14.25px;
	color: #eee;
}

.bm-more {
	margin-left: auto;
	margin-right: 22px;
}

.ico-num {
	font-family: "Open Sans", sans-serif;
	font-weight: 700;
	text-anchor: middle;
}

.ico-num-green {
	font-size: 13px;
	fill: #1c9c48;
}

.ico-num-white {
	font-size: 11px;
	fill: #fff;
}

.ico-x {
	font: 700 14px "Open Sans", sans-serif;
	text-anchor: middle;
	fill: #fff;
}

/* page */
.page {
	position: relative;
	flex: 1;
	display: flex;
	flex-direction: column;
	min-height: 0;
}

.rec-dot {
	position: absolute;
	left: 0;
	top: 0;
	width: 11px;
	height: 11px;
	border-radius: 50%;
	background: #ff5757;
}

.title {
	margin: 47px 0 0;
	font-size: 26.8px;
	line-height: 36px;
	font-weight: 700;
	text-align: center;
	color: #000;
}

.replay {
	display: block;
	width: 1830px;
	height: 57px;
	margin: 44px 0 0 45px;
	border: 0;
	border-radius: 29px;
	background: #e26900;
	color: #fff;
	font: 700 17.5px "Open Sans", sans-serif;
}

.plan {
	display: block;
	flex: none;
	margin: 147px 0 0 290px;
	filter: blur(.5px);
}

.floor {
	fill: #ebecef;
}

.wall {
	fill: none;
	stroke: #222;
	stroke-width: 3;
}

.outer {
	fill: none;
	stroke: #000;
	stroke-width: 5;
}

.door path, .door use {
	fill: none;
	stroke: #555;
	stroke-width: 2;
}

.dim {
	fill: none;
	stroke: #888;
	stroke-width: 2;
}

.dim-text text {
	font-size: 14px;
	fill: #666;
	text-anchor: middle;
	dominant-baseline: central;
}

.room text {
	font-size: 17.4px;
	fill: #333;
	text-anchor: middle;
	dominant-baseline: central;
}

.room .room-faint {
	fill: #8a7a68;
}

.pos {
	fill: #4040ff;
}

.activate {
	position: absolute;
	left: 1555px;
	top: 796px;
	color: rgba(110, 110, 110, .6);
}

.activate-big {
	font-size: 24px;
	line-height: 32px;
}

.activate-small {
	font-size: 17.3px;
	line-height: 24px;
}

/* windows taskbar */
.taskbar {
	flex: none;
	display: flex;
	align-items: stretch;
	height: 50px;
	background: linear-gradient(90deg, #21383f, #1c2a43);
	color: #fff;
}

.start {
	align-self: center;
	margin: 0 20px;
}

.search {
	display: flex;
	align-items: center;
	gap: 14px;
	width: 430px;
	padding-left: 15px;
	background: #f1f1f1;
	border: 1px solid #bbb;
	border-width: 1px 0;
	color: #222;
	font-size: 18px;
}

.cell {
	position: relative;
	flex: none;
	display: flex;
	align-items: center;
	justify-content: center;
	width: 56px;
}

.cell:nth-child(3) {
	margin-left: 2px;
}

.cell-task {
	margin: 0 5px 0 4px;
}

.cell.on::after {
	content: "";
	position: absolute;
	left: 5px;
	right: 5px;
	bottom: 0;
	height: 3px;
	background: #76b9ed;
}

.cell-active {
	background: #49565f;
}

.tb-ico {
	display: block;
	flex: none;
	width: 28px;
	height: 28px;
}

.tray {
	flex: 1;
	display: flex;
	align-items: center;
	padding-left: 33px;
}

.tray-moon {
	width: 24px;
}

.tray-temp {
	margin: 0 21px 0 13px;
	font-size: 17px;
}

.tray-ico {
	width: 18px;
	height: 18px;
	margin-right: 12px;
}

.tray-lang {
	margin-left: 2px;
	font-size: 13.5px;
}

.clock {
	display: flex;
	flex-direction: column;
	align-items: center;
	gap: 4px;
	width: 90px;
	margin-left: 5px;
	font-size: 14px;
	line-height: 20px;
}

.notif {
	position: relative;
	margin-left: 12px;
}

.notif-badge {
	position: absolute;
	left: 8px;
	top: 8px;
	width: 20px;
	height: 20px;
	border-radius: 50%;
	border: 1px solid #888;
	background: #2a2f38;
	font-size: 12px;
	font-weight: 700;
	line-height: 18px;
	text-align: center;
}
```
